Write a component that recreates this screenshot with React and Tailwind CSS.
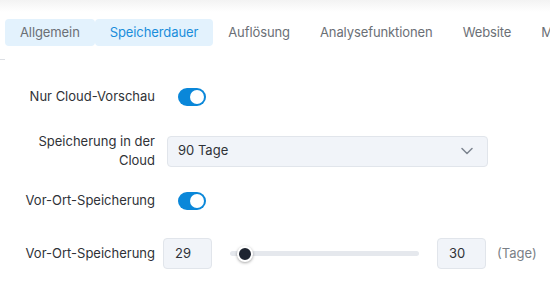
import React from 'react';

const tabs = ['Allgemein', 'Speicherdauer', 'Auflösung', 'Analysefunktionen', 'Website', 'Mehr'];

function Toggle() {
  return (
    <div className="w-[28px] h-[18px] rounded-full bg-[#0a87d9] flex items-center justify-end pr-[2px]">
      <span className="w-[14px] h-[14px] rounded-full bg-white"></span>
    </div>
  );
}

export default function App() {
  return (
    <div className="w-[550px] h-[283px] bg-white overflow-hidden font-['Inter','Noto_Sans',sans-serif] text-[13px]">
      {/* top shadow */}
      <div className="h-[12px] bg-gradient-to-b from-[#f3f3f3] to-white"></div>

      {/* TABS */}
      <div className="flex pl-[5px] pt-[7px] whitespace-nowrap tracking-[-0.1px]">
        {tabs.map((t, i) => (
          <div
            key={t}
            className={
              'h-[27px] px-[15px] flex items-center rounded-[4px] ' +
              (i === 0 ? 'bg-[#e3f2fd] text-[#6b6f76] ' : '') +
              (i === 1 ? 'bg-[#e3f2fd] text-[#1a8ddb] ' : '') +
              (i > 1 ? 'text-[#6b6f76] px-[14px] ' : '')
            }
          >
            {t}
          </div>
        ))}
      </div>
      <div className="w-[5px] h-px bg-[#dcdfe4] mt-[13px]"></div>

      {/* FORM */}
      <div className="flex flex-col text-[#2f3237]">
        <div className="flex items-center h-[18px] mt-[28px]">
          <div className="w-[155px] text-right">Nur Cloud-Vorschau</div>
          <div className="ml-[23px]"><Toggle /></div>
        </div>

        <div className="flex items-center mt-[26px]">
          <div className="w-[155px] text-right leading-[19px]">Speicherung in der<br />Cloud</div>
          <div className="ml-[12px] w-[321px] h-[31px] rounded-[4px] bg-[#f1f4f9] border border-[#e1e5eb] flex items-center justify-between pl-[10px] pr-[14px]">
            <span>90 Tage</span>
            <svg width="12" height="8" viewBox="0 0 12 8" fill="none">
              <path d="M1 1.5L6 6.5L11 1.5" stroke="#7d8590" strokeWidth="1.5" strokeLinecap="round" strokeLinejoin="round" />
            </svg>
          </div>
        </div>

        <div className="flex items-center h-[18px] mt-[22px]">
          <div className="w-[155px] text-right">Vor-Ort-Speicherung</div>
          <div className="ml-[23px]"><Toggle /></div>
        </div>

        <div className="flex items-center mt-[28px]">
          <div className="w-[155px] text-right">Vor-Ort-Speicherung</div>
          <div className="ml-[8px] w-[49px] h-[31px] rounded-[4px] bg-[#f1f4f9] border border-[#e1e5eb] flex items-center pl-[11px]">29</div>
          <div className="ml-[18px] w-[189px] h-[5px] rounded-full bg-[#e5e8ed] relative">
            <span className="absolute left-[7px] top-1/2 -translate-y-1/2 w-[16px] h-[16px] rounded-full bg-[#1e2430] border-2 border-white shadow-[0_1px_3px_rgba(0,0,0,0.35)]"></span>
          </div>
          <div className="ml-[18px] w-[49px] h-[31px] rounded-[4px] bg-[#f1f4f9] border border-[#e1e5eb] flex items-center pl-[11px]">30</div>
          <div className="ml-[11px] text-[#7a7f87]">(Tage)</div>
        </div>
      </div>
    </div>
  );
}
